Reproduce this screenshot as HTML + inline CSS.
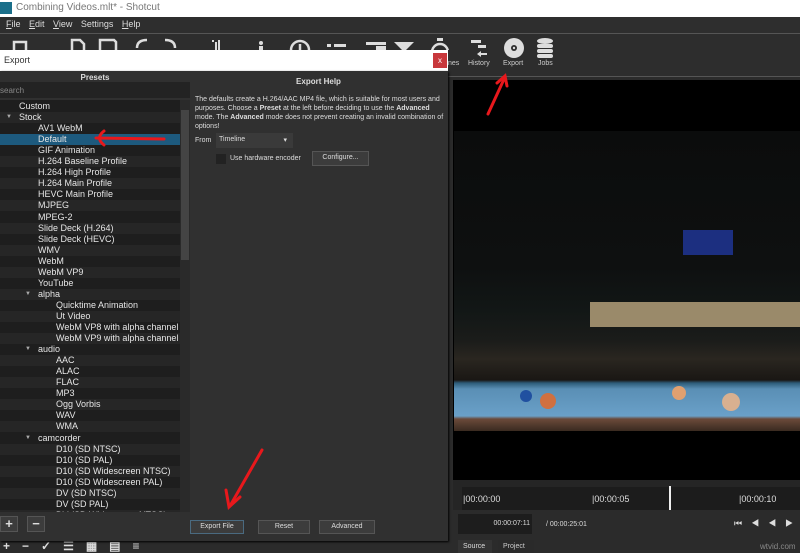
<!DOCTYPE html>
<html><head><meta charset="utf-8"><style>
*{margin:0;padding:0;box-sizing:border-box}
body{width:800px;height:553px;overflow:hidden;background:#2b2b2b;font-family:"Liberation Sans",sans-serif;position:relative;color:#ddd}
.a{position:absolute}
.row{position:absolute;left:0;width:180px;height:11px;font-size:9px;line-height:11px;color:#e6e6e6;white-space:nowrap}
.btn{position:absolute;height:14px;background:#3c3c3c;border:1px solid #555;font-size:7px;color:#ddd;text-align:center;line-height:12px}
.tb{position:absolute;top:60px;font-size:7px;color:#ccc}
</style></head><body>
<!-- title bar -->
<div class="a" style="left:0;top:0;width:800px;height:17px;background:#fff"></div>
<div class="a" style="left:0;top:2px;width:12px;height:12px;background:#1b6f8a"></div>
<div class="a" style="left:16px;top:2px;font-size:10px;color:#777">Combining Videos.mlt* - Shotcut</div>
<!-- menu -->
<div class="a" style="left:0;top:17px;width:800px;height:16px;background:#2e2e2e"></div>
<div class="a" style="left:6px;top:19px;font-size:9px;color:#ddd;word-spacing:6px"><u>F</u>ile <u>E</u>dit <u>V</u>iew Settings <u>H</u>elp</div>
<div class="a" style="left:0;top:33px;width:800px;height:1px;background:#555"></div>
<!-- toolbar -->
<div class="a" style="left:0;top:34px;width:800px;height:42px;background:#2d2d2d"></div>
<div class="a" style="left:0;top:76px;width:800px;height:1px;background:#555"></div>
<svg class="a" style="left:0;top:34px" width="460" height="16">
<g fill="none" stroke="#ddd" stroke-width="2.5">
<path d="M14 16 V8 h12 v8"/><path d="M72 16 V6 h8 l4 4 v6"/><path d="M100 16 V6 h14 l2 2 v8"/>
<path d="M137 14 q0-8 10-8"/><path d="M175 14 q0-8-10-8"/>
<circle cx="300" cy="16" r="9"/><path d="M300 10 v6"/>
</g>
<g fill="#ddd"><rect x="212" y="6" width="2" height="2"/><rect x="215" y="8" width="2" height="8"/><rect x="218" y="6" width="2" height="10"/>
<circle cx="261" cy="9" r="2"/><rect x="259" y="12" width="4" height="4"/>
<rect x="327" y="10" width="4" height="3"/><rect x="334" y="10" width="12" height="3"/>
<rect x="366" y="8" width="20" height="3"/><rect x="376" y="12" width="10" height="4"/>
<path d="M394 8 h20 l-10 10z"/><rect x="437" y="4" width="6" height="3"/>
</g><circle cx="440" cy="18" r="8" fill="none" stroke="#ddd" stroke-width="2.5"/>
</svg>
<svg class="a" style="left:465px;top:36px" width="100" height="26">
<g fill="#ddd"><rect x="6" y="4" width="10" height="3"/><rect x="13" y="9" width="8" height="3"/><path d="M12 18 l4-3 v2 h6 v2 h-6 v2z"/>
<circle cx="49" cy="12" r="10"/><ellipse cx="80" cy="5" rx="8" ry="3"/><rect x="72" y="8" width="16" height="4" rx="2"/><rect x="72" y="13" width="16" height="4" rx="2"/><rect x="72" y="18" width="16" height="4" rx="2"/></g>
<circle cx="49" cy="12" r="3" fill="#2d2d2d"/><circle cx="49" cy="12" r="1.2" fill="#ddd"/>
</svg>
<div class="tb" style="left:468px">History</div>
<div class="tb" style="left:503px">Export</div>
<div class="tb" style="left:538px">Jobs</div>
<div class="tb" style="left:448px">nes</div>
<!-- main right area -->
<div class="a" style="left:453px;top:80px;width:347px;height:400px;background:#000"></div>
<div class="a" style="left:454px;top:131px;width:346px;height:300px;background:linear-gradient(#0b0c0c 0%,#0e1010 45%,#121716 60%,#1b1c1a 70%,#2a2620 76%,#1a1714 83%,#2d5c79 84%,#5a8fb5 86%,#6aa0c8 95%,#6b4a3a 96%,#3a2a20 100%)"></div>
<div class="a" style="left:590px;top:302px;width:210px;height:25px;background:#9a8a6a"></div>
<div class="a" style="left:683px;top:230px;width:50px;height:25px;background:#1c2f80"></div>
<div class="a" style="left:520px;top:390px;width:12px;height:12px;border-radius:50%;background:#2050a0"></div>
<div class="a" style="left:540px;top:393px;width:16px;height:16px;border-radius:50%;background:#d07040"></div>
<div class="a" style="left:672px;top:386px;width:14px;height:14px;border-radius:50%;background:#e0a070"></div>
<div class="a" style="left:722px;top:393px;width:18px;height:18px;border-radius:50%;background:#d8b090"></div>
<div class="a" style="left:453px;top:480px;width:347px;height:30px;background:#252525"></div>
<div class="a" style="left:462px;top:487px;width:338px;height:23px;background:#1c1c1c"></div>
<div class="a" style="left:463px;top:494px;font-size:9px;color:#ddd">|00:00:00</div>
<div class="a" style="left:592px;top:494px;font-size:9px;color:#ddd">|00:00:05</div>
<div class="a" style="left:739px;top:494px;font-size:9px;color:#ddd">|00:00:10</div>
<div class="a" style="left:669px;top:486px;width:2px;height:24px;background:#eee"></div>
<div class="a" style="left:458px;top:514px;width:74px;height:20px;background:#1d1d1d;font-size:7px;color:#ddd;text-align:right;padding:6px 2px 0 0">00:00:07:11</div>
<div class="a" style="left:546px;top:521px;font-size:7px;color:#ddd">/ 00:00:25:01</div>
<div class="a" style="left:734px;top:518px;font-size:9px;color:#ddd;letter-spacing:9px">⏮◀◀▶</div>
<div class="a" style="left:458px;top:540px;width:34px;height:13px;background:#333;font-size:7px;color:#ddd;padding:3px 0 0 5px">Source</div>
<div class="a" style="left:498px;top:540px;width:36px;height:13px;background:#2a2a2a;font-size:7px;color:#ccc;padding:3px 0 0 5px">Project</div>
<div class="a" style="left:760px;top:542px;font-size:8px;color:#888">wtvid.com</div>
<!-- bottom left icons -->
<div class="a" style="left:0;top:539px;width:195px;height:14px;background:#2b2b2b"></div>
<div class="a" style="left:3px;top:539px;font-size:12px;color:#ddd;letter-spacing:12px;font-weight:bold">+−✓☰▦▤≡</div>
<!-- dialog -->
<div class="a" style="left:0;top:50px;width:448px;height:21px;background:#fff"></div>
<div class="a" style="left:4px;top:55px;font-size:9px;color:#333">Export</div>
<div class="a" style="left:433px;top:53px;width:14px;height:15px;background:#c8383c;color:#fff;font-size:8px;text-align:center;line-height:15px">x</div>
<div class="a" style="left:0;top:71px;width:448px;height:470px;background:#303030;box-shadow:1px 1px 2px #000"></div>
<div class="a" style="left:0;top:73px;width:190px;text-align:center;font-size:8px;font-weight:bold;color:#ddd">Presets</div>
<div class="a" style="left:0;top:82px;width:190px;height:16px;background:#232323;font-size:8px;color:#888;padding:4px 0 0 0">search</div>
<div class="a" style="left:0;top:100px;width:190px;height:412px;background:#1e1e1e;overflow:hidden">
<div id="tree"></div>
</div>
<div class="a" style="left:180px;top:100px;width:10px;height:412px;background:#2a2a2a"></div>
<div class="a" style="left:181px;top:110px;width:8px;height:150px;background:#444"></div>
<div class="btn" style="left:0;top:516px;width:18px;height:16px;font-size:13px;font-weight:bold;line-height:14px">+</div>
<div class="btn" style="left:27px;top:516px;width:18px;height:16px;font-size:13px;font-weight:bold;line-height:14px">−</div>
<div class="a" style="left:190px;top:77px;width:257px;text-align:center;font-size:8px;font-weight:bold;color:#ddd">Export Help</div>
<div class="a" style="left:195px;top:95px;width:250px;font-size:7px;line-height:9px;color:#ddd">The defaults create a H.264/AAC MP4 file, which is suitable for most users and purposes. Choose a <b>Preset</b> at the left before deciding to use the <b>Advanced</b> mode. The <b>Advanced</b> mode does not prevent creating an invalid combination of options!</div>
<div class="a" style="left:195px;top:137px;font-size:7px;color:#ddd">From</div>
<div class="a" style="left:216px;top:133px;width:77px;height:15px;background:#3a3a3a;font-size:7px;color:#ddd;padding:3px 0 0 3px">Timeline<span style="position:absolute;right:6px;top:3px">▾</span></div>
<div class="a" style="left:216px;top:154px;width:10px;height:10px;background:#222"></div>
<div class="a" style="left:230px;top:155px;font-size:7px;color:#ddd">Use hardware encoder</div>
<div class="btn" style="left:312px;top:151px;width:57px;height:15px">Configure...</div>
<div class="btn" style="left:190px;top:520px;width:54px;border-color:#4a6a80">Export File</div>
<div class="btn" style="left:258px;top:520px;width:52px">Reset</div>
<div class="btn" style="left:319px;top:520px;width:56px">Advanced</div>
<!-- arrows -->
<svg class="a" style="left:0;top:0" width="800" height="553">
<g stroke="#e8181c" stroke-width="3" fill="none" stroke-linecap="round">
<path d="M164 139 L96 138"/><path d="M104 131 Q95 138 104 145"/>
<path d="M488 114 L505 77"/><path d="M497 83 L505 76 L507 86"/>
<path d="M262 450 Q245 480 230 506"/><path d="M226 490 L229 507 L240 497"/>
</g></svg>
<script>
var items=[["Custom",0],["Stock",0,1],["AV1 WebM",1],["Default",1],["GIF Animation",1],["H.264 Baseline Profile",1],["H.264 High Profile",1],["H.264 Main Profile",1],["HEVC Main Profile",1],["MJPEG",1],["MPEG-2",1],["Slide Deck (H.264)",1],["Slide Deck (HEVC)",1],["WMV",1],["WebM",1],["WebM VP9",1],["YouTube",1],["alpha",1,1],["Quicktime Animation",2],["Ut Video",2],["WebM VP8 with alpha channel",2],["WebM VP9 with alpha channel",2],["audio",1,1],["AAC",2],["ALAC",2],["FLAC",2],["MP3",2],["Ogg Vorbis",2],["WAV",2],["WMA",2],["camcorder",1,1],["D10 (SD NTSC)",2],["D10 (SD PAL)",2],["D10 (SD Widescreen NTSC)",2],["D10 (SD Widescreen PAL)",2],["DV (SD NTSC)",2],["DV (SD PAL)",2],["DV (SD Widescreen NTSC)",2]];
var h="";items.forEach(function(it,i){var y=1+i*11.05;var bg=it[0]=="Default"?"#1d5a7e":(i%2?"#262626":"#1e1e1e");var x=[19,38,56][it[1]];
h+='<div class="row" style="top:'+y+'px;background:'+bg+'">'+(it[2]?'<span style="position:absolute;left:'+(x-13)+'px;font-size:6px;color:#aaa">▼</span>':'')+'<span style="position:absolute;left:'+x+'px">'+it[0]+'</span></div>';});
document.getElementById("tree").innerHTML=h;
</script>
</body></html>
